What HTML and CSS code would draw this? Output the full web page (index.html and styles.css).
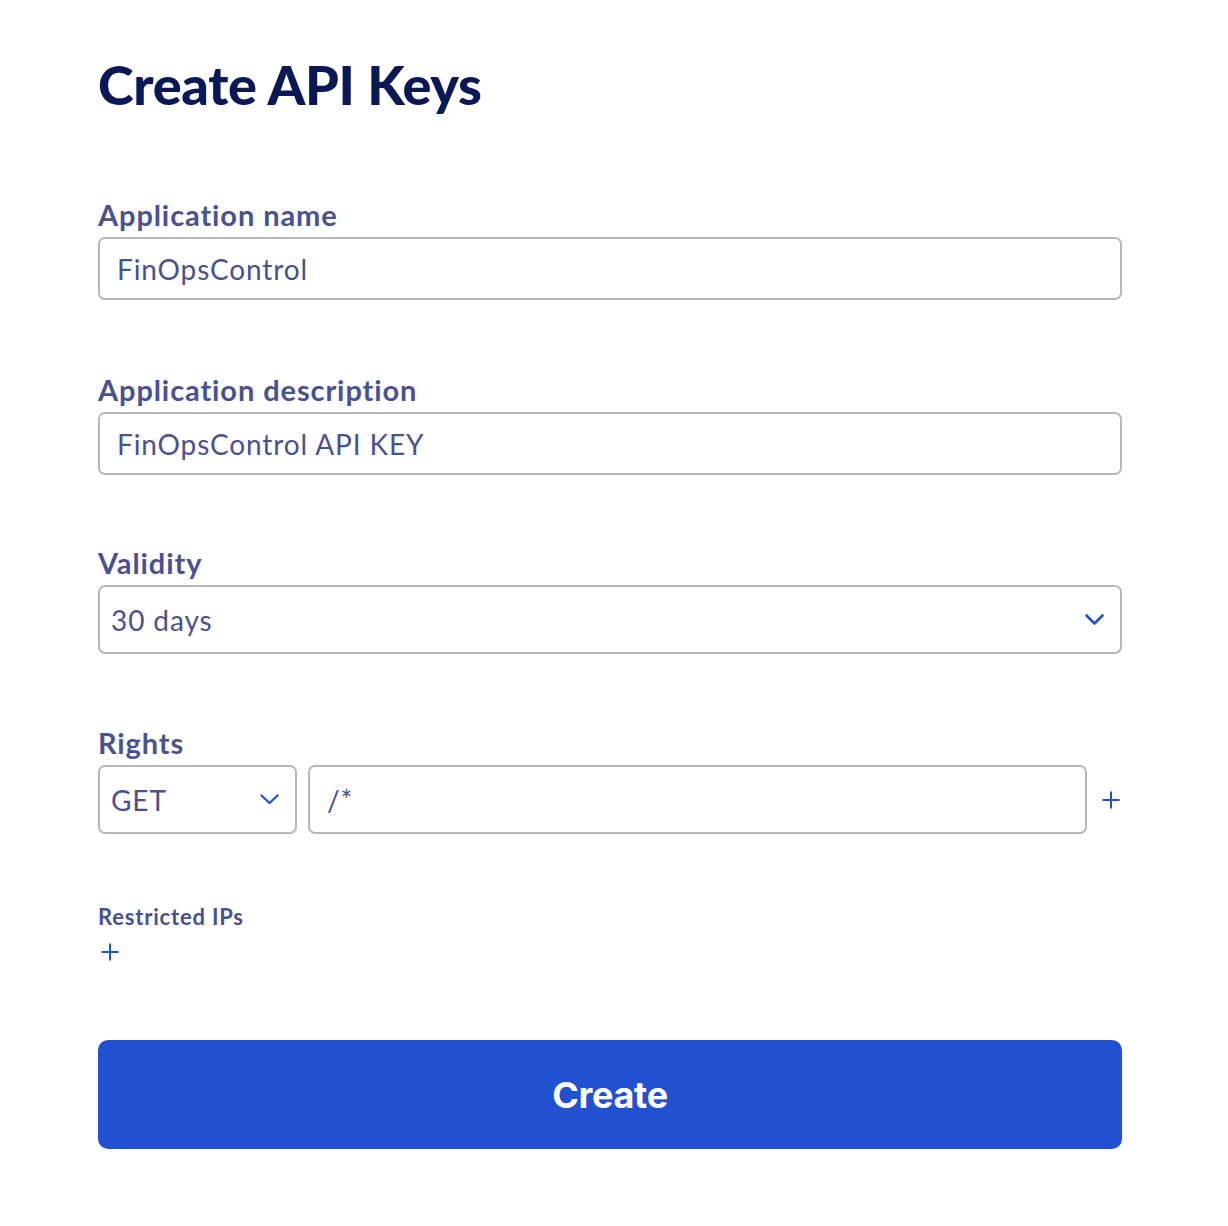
FILE: index.html
```html
<!DOCTYPE html>
<html lang="en">
<head>
<meta charset="utf-8">
<title>Create API Keys</title>
<link rel="stylesheet" href="styles.css">
</head>
<body>
<main class="page">
  <h1 class="title">Create API Keys</h1>
  <form class="form">
    <div class="field">
      <label class="label">Application name</label>
      <div class="input">FinOpsControl</div>
    </div>
    <div class="field field-desc">
      <label class="label">Application description</label>
      <div class="input">FinOpsControl API KEY</div>
    </div>
    <div class="field field-validity">
      <label class="label">Validity</label>
      <div class="select select-wide">
        <span>30 days</span>
        <svg class="chev" width="19" height="12" viewBox="0 0 19 12"><path d="M1.5 1.5 L9.5 9.5 L17.5 1.5" fill="none" stroke="#2150d0" stroke-width="2.6" stroke-linecap="round" stroke-linejoin="round"/></svg>
      </div>
    </div>
    <div class="field field-rights">
      <label class="label">Rights</label>
      <div class="rights-row">
        <div class="select select-method">
          <span>GET</span>
          <svg class="chev" width="19" height="11" viewBox="0 0 19 11"><path d="M1.5 1.5 L9.5 9 L17.5 1.5" fill="none" stroke="#2150d0" stroke-width="2.2" stroke-linecap="round" stroke-linejoin="round"/></svg>
        </div>
        <div class="input input-path">/*</div>
        <svg class="plus" width="20" height="20" viewBox="0 0 20 20"><path d="M10 1.5 V18.5 M1.5 10 H18.5" stroke="#2150d0" stroke-width="2"/></svg>
      </div>
    </div>
    <div class="field-ips">
      <label class="label-small">Restricted IPs</label>
      <svg class="plus plus-ips" width="20" height="20" viewBox="0 0 20 20"><path d="M10 1.5 V18.5 M1.5 10 H18.5" stroke="#2150d0" stroke-width="2"/></svg>
    </div>
    <button type="button" class="btn">Create</button>
  </form>
</main>
</body>
</html>
```
FILE: styles.css
```css
html, body {
  margin: 0;
  background: #ffffff;
}
.page {
  width: 1024px;
  padding: 0 0 0 98px;
  font-family: "Lato", "Open Sans", sans-serif;
  font-variant-ligatures: none;
  color: #4a5190;
}
.title {
  margin: 0;
  padding-top: 53px;
  font-size: 54px;
  line-height: 64px;
  font-weight: 900;
  color: #0a1856;
  letter-spacing: -0.3px;
}
.form {
  display: flex;
  flex-direction: column;
  margin-top: 80px;
}
.field {
  display: flex;
  flex-direction: column;
  gap: 4px;
  margin-bottom: 72px;
}
.field-desc {
  margin-bottom: 70px;
}
.field-validity {
  margin-bottom: 71px;
}
.label {
  font-size: 29px;
  line-height: 36px;
  font-weight: 700;
  letter-spacing: 0.9px;
  color: #4a5190;
}
.input {
  box-sizing: border-box;
  height: 63px;
  border: 2px solid #b8b8b8;
  border-radius: 7px;
  padding: 0 17px;
  display: flex;
  align-items: center;
  font-size: 28px;
  letter-spacing: 0.9px;
  color: #4a5190;
}
.select {
  box-sizing: border-box;
  height: 69px;
  border: 2px solid #b8b8b8;
  border-radius: 7px;
  padding: 0 16px 0 11px;
  display: flex;
  align-items: center;
  justify-content: space-between;
  font-size: 28px;
  letter-spacing: 0.9px;
  color: #4a5190;
}
.rights-row {
  display: flex;
  align-items: center;
  gap: 11px;
}
.select-method {
  width: 199px;
  flex: none;
}
.input-path {
  height: 69px;
  flex: 1;
  padding-left: 17px;
}
.plus {
  display: block;
  flex: none;
  margin: 0 1px 0 3px;
}
.field-ips {
  display: flex;
  flex-direction: column;
  margin-top: -3px;
}
.label-small {
  font-size: 22px;
  line-height: 28px;
  font-weight: 700;
  letter-spacing: 0.8px;
  color: #4a5190;
}
.plus-ips {
  margin: 11px 0 0 2px;
}
.btn {
  margin-top: 78px;
  height: 109px;
  border: none;
  border-radius: 10px;
  background: #2150d0;
  color: #ffffff;
  font-family: "Inter", "Liberation Sans", sans-serif;
  font-size: 36px;
  font-weight: 700;
  letter-spacing: -0.3px;
}
```
